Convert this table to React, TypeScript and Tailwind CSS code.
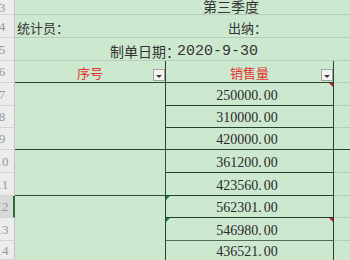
import React from 'react';

// Row heights for sheet rows 3..14 (row 3 and row 14 are cut by the viewport)
const ROW_NUMBERS = [3, 4, 5, 6, 7, 8, 9, 10, 11, 12, 13, 14];

const SALES = ['250000.00', '310000.00', '420000.00', '361200.00', '423560.00', '562301.00', '546980.00', '436521.00'];

const CJK = { fontFamily: '"Noto Sans CJK SC", "Noto Sans", sans-serif' };
const NUM = { fontFamily: '"Liberation Serif", "DejaVu Serif", serif' };

const FilterButton: React.FC = () => (
    <div className="absolute right-0 bottom-[1px] w-[12px] h-[12px] bg-[#f3f3f3] border border-[#a3a3a3] flex items-center justify-center">
        <div className="w-0 h-0 mt-[2px] border-l-[3px] border-r-[3px] border-t-[3px] border-l-transparent border-r-transparent border-t-[#3a3a3a]" />
    </div>
);

const Amount: React.FC<{ value: string }> = ({ value }) => {
    const [int, dec] = value.split('.');
    return (
        <span style={NUM} className="text-[14px] leading-none text-[#2b2b2b]">
            {int}
            <span className="mr-[2px]">.</span>
            {dec}
        </span>
    );
};

const App: React.FC = () => {
    return (
        <div className="w-[350px] h-[260px] overflow-hidden bg-[#cce8cf] grid grid-cols-[15px_151px_168px_16px] grid-rows-[15px_23px_23px_22px_23px_22px_22px_23px_23px_22px_23px_19px]">
            {/* Row headers */}
            {ROW_NUMBERS.map((n, i) => (
                <div
                    key={n}
                    style={{ gridRow: i + 1, gridColumn: 1 }}
                    className={`overflow-hidden flex items-center border-b border-[#d3d3d3] ${n === 12 ? 'bg-[#d9d9d9] border-r-2 border-r-[#2f6b3b]' : 'bg-[#ececec] border-r border-r-[#c4c4c4]'}`}
                >
                    <div style={NUM} className="ml-[-12px] w-[28px] shrink-0 text-center text-[13px] leading-none text-[#979797]">
                        {n}
                    </div>
                </div>
            ))}

            {/* Row 3: title */}
            <div className="col-start-2 col-span-3 row-start-1 flex items-center pl-[188px] pb-[2px] border-b border-[#b7cdb9]">
                <span style={CJK} className="text-[14px] leading-none text-[#333]">第三季度</span>
            </div>

            {/* Row 4 */}
            <div className="col-start-2 col-span-3 row-start-2 flex items-center pl-[2px] pt-[3px] border-b border-[#b7cdb9]">
                <span style={CJK} className="text-[13px] leading-none text-[#333]">统计员：</span>
                <span style={CJK} className="ml-[159px] text-[13px] leading-none text-[#333]">出纳：</span>
            </div>

            {/* Row 5 */}
            <div className="col-start-2 col-span-3 row-start-3 flex items-center pl-[95px] pt-[4px] border-b border-[#b7cdb9]">
                <span style={CJK} className="text-[14px] leading-none text-[#333]">制单日期：</span>
                <span style={{ fontFamily: '"Liberation Mono", monospace' }} className="text-[15px] leading-none text-[#333] ml-[-3px]">2020-9-30</span>
            </div>

            {/* Row 6: table header */}
            <div className="col-start-2 row-start-4 relative flex items-center justify-center pt-[2px] border-r border-b border-[#25422a]">
                <span style={CJK} className="text-[13px] leading-none text-[#e5322c]">序号</span>
                <FilterButton />
            </div>
            <div className="col-start-3 row-start-4 relative flex items-center justify-center pt-[2px] border-r border-b border-[#25422a]">
                <span style={CJK} className="text-[13px] leading-none text-[#e5322c]">销售量</span>
                <FilterButton />
            </div>
            <div className="col-start-4 row-start-4 border-b border-[#b7cdb9]" />

            {/* Column A merged blocks */}
            <div className="col-start-2 row-start-5 row-span-3 border-r border-b border-[#25422a]" />
            <div className="col-start-2 row-start-8 row-span-2 border-r border-b border-[#2f4f35]" />
            <div className="col-start-2 row-start-10 row-span-3 border-r border-[#25422a]" />

            {/* Column B values */}
            {SALES.map((v, i) => (
                <div
                    key={v}
                    style={{ gridRow: i + 5, gridColumn: 3 }}
                    className={`relative flex items-center justify-center pt-[3px] pr-[5px] border-r border-r-[#25422a] ${i < 7 ? (i === 6 ? 'border-b border-b-[#55695a]' : 'border-b border-b-[#25422a]') : ''}`}
                >
                    <Amount value={v} />
                    {(i === 0 || i === 6) && (
                        <div className="absolute top-0 right-0 w-0 h-0 border-t-[4px] border-l-[4px] border-t-[#d8102a] border-l-transparent" />
                    )}
                    {(i === 5 || i === 6) && (
                        <div className="absolute top-0 left-0 w-0 h-0 border-t-[4px] border-r-[4px] border-t-[#1d7a3c] border-r-transparent" />
                    )}
                </div>
            ))}

            {/* Column C */}
            {[5, 6, 7, 8, 9, 10, 11, 12].map((r) => (
                <div
                    key={r}
                    style={{ gridRow: r, gridColumn: 4 }}
                    className={r === 7 ? 'border-b border-[#25422a]' : r === 12 ? '' : 'border-b border-[#b7cdb9]'}
                />
            ))}
        </div>
    );
};

export default App;
